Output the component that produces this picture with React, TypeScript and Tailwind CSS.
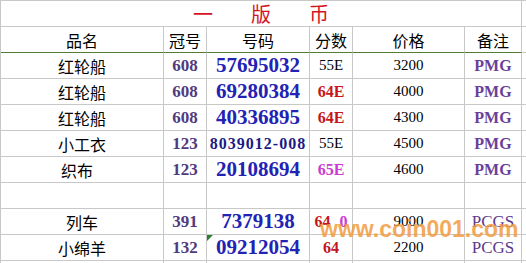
import React from "react";

const serif = "font-['Liberation_Serif',serif]";
const cjk = "font-['Noto_Sans_CJK_SC',sans-serif]";

type Row = {
  name: string;
  prefix: string;
  code: string;
  small?: boolean;
  score: React.ReactNode;
  price: string;
  note: string;
  flag?: boolean;
  nameShift?: boolean;
};

const plain = (t: string) => <span className={`${serif} text-[15px] text-black`}>{t}</span>;
const red = (t: string) => <span className={`${serif} text-[16px] font-bold text-[#c4161c]`}>{t}</span>;
const pink = (t: string) => <span className={`${serif} text-[16px] font-bold text-[#c93ccf]`}>{t}</span>;

const rows: (Row | null)[] = [
  { name: "红轮船", prefix: "608", code: "57695032", score: plain("55E"), price: "3200", note: "PMG" },
  { name: "红轮船", prefix: "608", code: "69280384", score: red("64E"), price: "4000", note: "PMG" },
  { name: "红轮船", prefix: "608", code: "40336895", score: red("64E"), price: "4300", note: "PMG" },
  { name: "小工衣", prefix: "123", code: "8039012-008", small: true, score: plain("55E"), price: "4500", note: "PMG" },
  { name: "织布", prefix: "123", code: "20108694", score: pink("65E"), price: "4600", note: "PMG", nameShift: true },
  null,
  {
    name: "列车",
    prefix: "391",
    code: "7379138",
    score: (
      <span className="flex gap-[9px]">
        {red("64")}
        {pink("0")}
      </span>
    ),
    price: "9000",
    note: "PCGS",
  },
  { name: "小绵羊", prefix: "132", code: "09212054", score: red("64"), price: "2200", note: "PCGS", flag: true },
  null,
];

const cell = "h-[26px] border-b border-r border-[#c8c8c8] flex items-center justify-center";

export default function App() {
  return (
    <div className="relative w-[526px] h-[263px] overflow-hidden bg-white">
      <div className="grid grid-cols-[163px_43px_103px_43px_112px_57px_1fr] border-t border-l border-[#c8c8c8]">
        {/* title */}
        <div className={`${cell} col-span-6 gap-[38px] ${cjk} text-[20px] font-normal text-[#d4141e]`}>
          <span>一</span>
          <span>版</span>
          <span>币</span>
        </div>
        <div className="h-[26px] border-b border-[#c8c8c8]" />

        {/* header */}
        {["品名", "冠号", "号码", "分数", "价格", "备注"].map((h) => (
          <div
            key={h}
            className={`h-[26px] border-b border-r border-b-[#527d32] border-r-[#c8c8c8] flex items-center justify-center ${cjk} text-[16px] text-black`}
          >
            {h}
          </div>
        ))}
        <div className="h-[26px] border-b border-[#c8c8c8]" />

        {rows.map((r, i) =>
          r ? (
            <React.Fragment key={i}>
              <div className={`${cell} ${cjk} text-[16px] text-black ${r.nameShift ? "pr-[10px]" : ""}`}>{r.name}</div>
              <div className={`${cell} ${serif} text-[17px] font-bold text-[#513a7d]`}>{r.prefix}</div>
              <div className={`${cell} relative`}>
                {r.flag && (
                  <span className="absolute left-0 top-0 w-0 h-0 border-t-[6px] border-r-[6px] border-t-[#2e7d32] border-r-transparent" />
                )}
                {r.small ? (
                  <span className={`${serif} text-[16px] font-bold tracking-[1px] text-[#1b1b85]`}>{r.code}</span>
                ) : (
                  <span className={`${serif} text-[21px] font-bold text-[#2222b4]`}>{r.code}</span>
                )}
              </div>
              <div className={cell}>{r.score}</div>
              <div className={`${cell} ${serif} text-[15px] text-black`}>{r.price}</div>
              <div
                className={`${cell} ${serif} ${
                  r.note === "PMG" ? "text-[16px] font-bold text-[#6b3f98]" : "text-[17px] text-[#5b3a8c]"
                }`}
              >
                {r.note}
              </div>
              <div className="h-[26px] border-b border-[#c8c8c8]" />
            </React.Fragment>
          ) : (
            <React.Fragment key={i}>
              {[0, 1, 2, 3, 4, 5].map((c) => (
                <div key={c} className={cell} />
              ))}
              <div className="h-[26px] border-b border-[#c8c8c8]" />
            </React.Fragment>
          )
        )}
      </div>

      {/* watermark */}
      <div className="absolute left-[320px] top-[218px] font-['Liberation_Sans',sans-serif] text-[23px] leading-none font-bold text-[#f29b3c]/85 pointer-events-none">
        www.coin001.com
      </div>
    </div>
  );
}
